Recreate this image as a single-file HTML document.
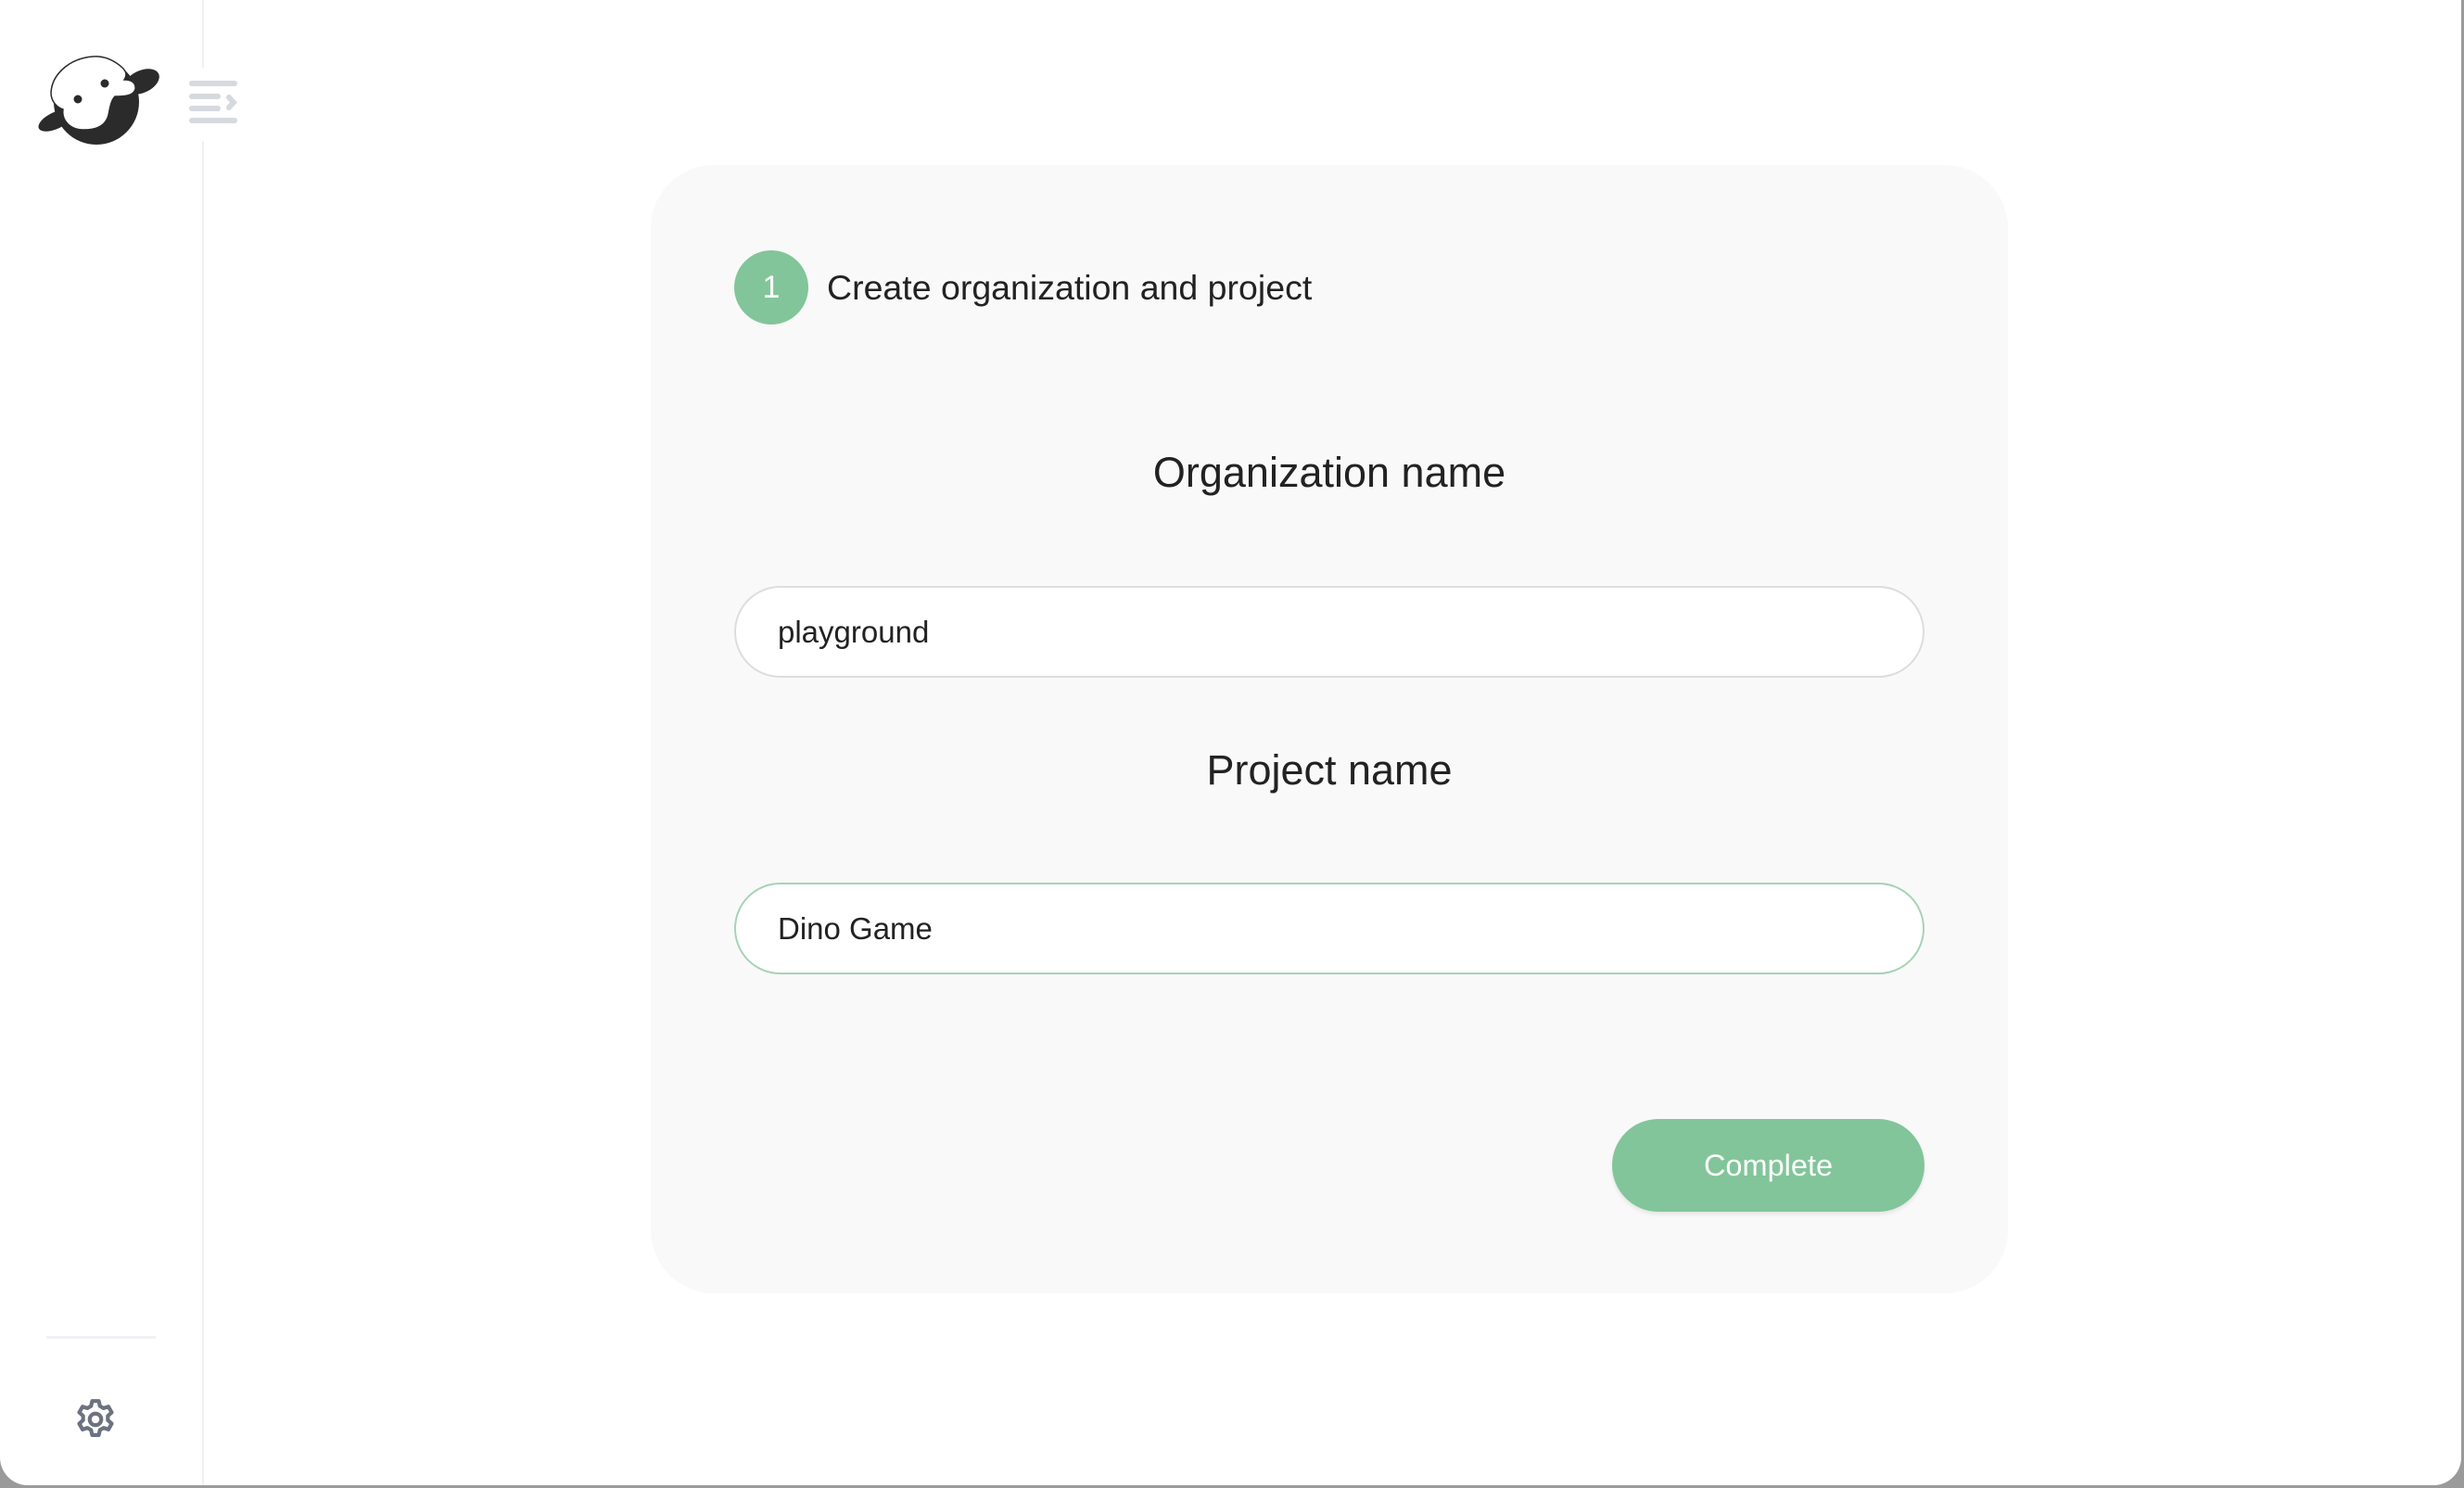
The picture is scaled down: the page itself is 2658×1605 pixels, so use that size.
<!DOCTYPE html>
<html><head><meta charset="utf-8"><style>
*{margin:0;padding:0;box-sizing:border-box}
html,body{width:2658px;height:1605px;background:#9a9a9a;overflow:hidden;font-family:"Liberation Sans",Arial,sans-serif}
.win{position:absolute;left:0;top:0;width:2655px;height:1602px;background:#fff;border-radius:0 0 30px 30px;overflow:hidden}
.div{position:absolute;left:218px;width:2px;background:#eef0f4}
.card{position:absolute;left:702px;top:178px;width:1464px;height:1217px;background:#f9f9f9;border-radius:68px}
.circle{position:absolute;left:792px;top:270px;width:80px;height:80px;border-radius:50%;background:#82c59a;color:#fff;font-size:34px;line-height:80px;text-align:center}
.step{position:absolute;left:892px;top:289px;font-size:37.5px;color:#222}
.lbl{position:absolute;left:702px;width:1464px;text-align:center;font-size:45px;color:#222}
.inp{position:absolute;left:792px;width:1284px;height:99px;border-radius:50px;background:#fff;border:2px solid #ddd;font-size:33px;color:#222;padding-left:45px;line-height:95px}
.btn{position:absolute;left:1739px;top:1207px;width:337px;height:100px;border-radius:50px;background:#82c59a;color:#fff;font-size:32.5px;text-align:center;line-height:100px;box-shadow:0 3px 4px rgba(0,0,0,.08)}
</style></head><body>
<div class="win">
<div class="div" style="top:0;height:73px"></div>
<div class="div" style="top:152px;height:1450px"></div>
<svg style="position:absolute;left:40px;top:58px" width="135" height="105" viewBox="0 0 135 105">
<ellipse cx="20" cy="72" rx="20" ry="9" transform="rotate(-25 20 72)" fill="#2b2b2b"/>
<ellipse cx="113" cy="30" rx="20" ry="12" transform="rotate(-25 113 30)" fill="#2b2b2b"/>
<circle cx="64" cy="52" r="46" fill="#2b2b2b"/>
<path d="M60 3 C35 5 16 22 15 42 C15 52 22 58 28 60 C26 72 36 82 50 82 C64 82 74 78 77 66 C79 56 80 50 84 46 C92 46 104 46 106 38 C107 30 100 28 94 28 C98 22 95 18 92 15 C82 6 72 2 60 3Z" fill="#fff" stroke="#2b2b2b" stroke-width="1.5"/>
<circle cx="73" cy="32" r="4.5" fill="#2b2b2b"/><circle cx="44" cy="49" r="4.5" fill="#2b2b2b"/>
</svg>
<svg style="position:absolute;left:204px;top:86px" width="54" height="50" viewBox="0 0 54 50">
<g stroke="#d6d9de" stroke-width="6" stroke-linecap="round" fill="none">
<line x1="3" y1="4" x2="49" y2="4"/><line x1="3" y1="18" x2="31" y2="18"/><line x1="3" y1="31" x2="31" y2="31"/><line x1="3" y1="44" x2="49" y2="44"/><polyline points="43,19 48,24.5 43,30"/></g></svg>
<div style="position:absolute;left:50px;top:1441px;width:118px;height:3px;background:#f1f1f6"></div>
<svg style="position:absolute;left:78px;top:1506px" width="50" height="50" viewBox="0 0 24 24" fill="none" stroke="#6b7280" stroke-width="2" stroke-linejoin="round">
<path d="M10.3 2.5h3.4l.6 2.6 1.9 1.1 2.5-.8 1.7 3-2 1.8v2.2l2 1.8-1.7 3-2.5-.8-1.9 1.1-.6 2.6h-3.4l-.6-2.6-1.9-1.1-2.5.8-1.7-3 2-1.8v-2.2l-2-1.8 1.7-3 2.5.8 1.9-1.1z"/><circle cx="12" cy="12" r="3"/></svg>
<div class="card"></div>
<div class="circle">1</div>
<div class="step">Create organization and project</div>
<div class="lbl" style="top:484px">Organization name</div>
<div class="inp" style="top:632px">playground</div>
<div class="lbl" style="top:805px">Project name</div>
<div class="inp" style="top:952px;border-color:#a6d3b6">Dino Game</div>
<div class="btn">Complete</div>
</div>
</body></html>
